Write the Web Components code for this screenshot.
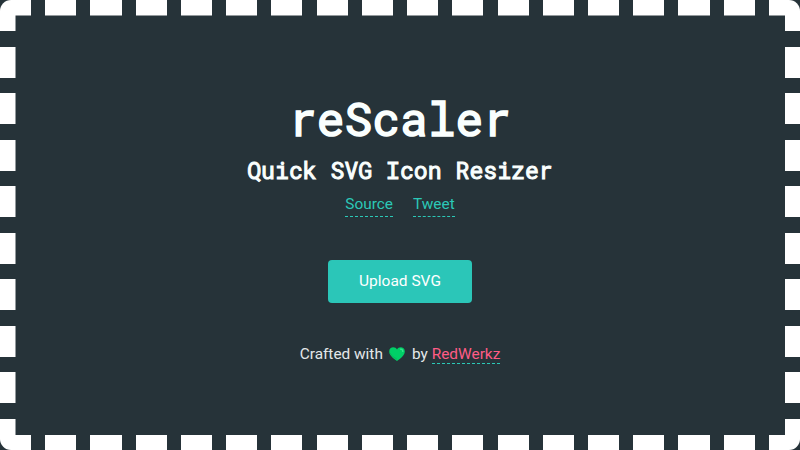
<!DOCTYPE html>
<html lang="en"><head><meta charset="utf-8"><title>reScaler</title>
<style>
html,body{margin:0;height:100%;background:#263339}
body{overflow:hidden;font:15.4px/20px Roboto,sans-serif;color:#e4e8ea}
</style></head><body>
<rescaler-app></rescaler-app>
<script>
const define=(name,html)=>customElements.define(name,class extends HTMLElement{
  constructor(){super();this.attachShadow({mode:'open'}).innerHTML=html;}
});
define('dashed-frame',`<style>
:host{display:block;box-sizing:border-box;width:100vw;height:100vh;border-radius:11px;padding:15.5px;overflow:hidden;
--h:repeating-linear-gradient(90deg,#fff 0 31.1px,transparent 31.1px 45.23px);
--v:repeating-linear-gradient(180deg,#fff 0 31.1px,transparent 31.1px 46.54px);
background:var(--h) top/100% 15.5px no-repeat,var(--h) bottom/100% 15.5px no-repeat,var(--v) left/15.5px 100% no-repeat,var(--v) right/15.5px 100% no-repeat}
</style><slot></slot>`);
define('title-block',`<style>
:host{display:block;text-align:center;color:#fafffe;font-family:"Roboto Mono","DejaVu Sans Mono",monospace}
h1,h2{margin:0;white-space:pre;font-weight:400}
h1{font-size:46.2px;line-height:62px;-webkit-text-stroke:1.6px currentColor}
h2{font-size:23.15px;line-height:30px;margin-top:5px;-webkit-text-stroke:1px currentColor}
</style><h1><slot name="name"></slot></h1><h2><slot></slot></h2>`);
define('dash-link',`<style>
:host{display:inline-block;color:#2bc8b7}
a{display:block;color:inherit;text-decoration:none;height:var(--drop,22px);line-height:20px;border-bottom:1px dashed #2bc8b7}
</style><a href="#"><slot></slot></a>`);
define('upload-button',`<style>
:host{display:block}
button{display:block;width:144.5px;height:42.5px;padding:0;border:0;border-radius:4px;background:#2bc6b8;color:#fff;font:15.5px/42.5px Roboto,sans-serif}
</style><button><slot></slot></button>`);
define('green-heart',`<style>:host{display:block;width:16px;height:14px}svg{display:block}</style>
<svg width="16" height="14" viewBox="0 0 16 14"><path d="M8 14C4.4 11.2.3 8.5.2 4.4.2-.4 6.3-1.1 8 2.5 9.7-1.1 15.8-.4 15.8 4.4 15.7 8.5 11.6 11.2 8 14Z" fill="#00cf67"/><path d="M11 2.3C13 1.8 14 3 13.8 5" fill="none" stroke="#38e58d" stroke-width="1.3"/><path d="M1 6C2.4 9 5.5 10.7 8 12.2" fill="none" stroke="#08b75c"/></svg>`);
define('rescaler-app',`<style>
main{display:flex;flex-direction:column;align-items:center;padding-top:72.5px}
nav{display:flex;gap:20px;margin-top:9px}
upload-button{margin-top:43px}
footer{display:flex;margin-top:41px;align-items:flex-start}
green-heart{margin:3px 6.5px 0 6.5px}
.author{color:#ff5c86;margin-left:4px;--drop:19px}
</style><dashed-frame><main>
<title-block><span slot="name">reScaler</span>Quick SVG Icon Resizer</title-block>
<nav><dash-link>Source</dash-link><dash-link>Tweet</dash-link></nav>
<upload-button>Upload SVG</upload-button>
<footer><span>Crafted with</span><green-heart></green-heart><span>by</span><dash-link class="author">RedWerkz</dash-link></footer>
</main></dashed-frame>`);
</script></body></html>
